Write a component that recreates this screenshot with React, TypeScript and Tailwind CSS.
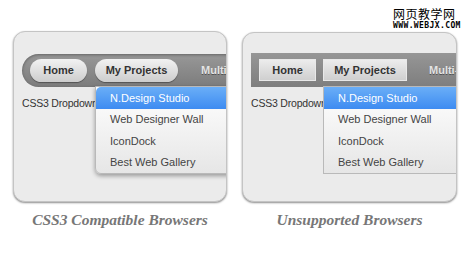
import React from "react";

const items = ["N.Design Studio", "Web Designer Wall", "IconDock", "Best Web Gallery"];

function Dropdown({ modern }: { modern: boolean }) {
  return (
    <div
      className={`absolute z-10 left-0 top-[27px] w-[160px] border border-[#b9b9b9] bg-gradient-to-b from-white to-[#e6e6e6] ${
        modern ? "rounded-bl-[6px] shadow-[0_2px_4px_rgba(0,0,0,0.35)]" : ""
      }`}
    >
      {items.map((label, i) => (
        <div
          key={label}
          className={`h-[21.5px] flex items-center pl-[14px] text-[11px] ${
            i === 0
              ? `bg-gradient-to-b from-[#6aaef7] to-[#3d8bf1] text-white ${modern ? "rounded-tl-[5px]" : ""}`
              : "text-[#444]"
          }`}
        >
          {label}
        </div>
      ))}
    </div>
  );
}

function Panel({ modern }: { modern: boolean }) {
  const btn = modern
    ? "rounded-full bg-gradient-to-b from-[#f2f2f2] to-[#cdcdcd] shadow-[0_1px_1px_rgba(0,0,0,0.35)]"
    : "bg-gradient-to-b from-[#ececec] to-[#cfcfcf] border border-[#e8e8e8]";
  return (
    <div
      className={`relative overflow-hidden rounded-[12px] border border-[#c4c4c4] bg-[#ebebeb] shadow-[0_1px_2px_rgba(0,0,0,0.45)] pl-[8px] ${
        modern ? "w-[214px] h-[171px] pt-[22px]" : "w-[215px] h-[170px] pt-[20px]"
      }`}
    >
      <div
        className={`flex items-center w-[280px] pl-[8px] bg-gradient-to-b ${
          modern
            ? "h-[33px] gap-[8px] rounded-l-full from-[#989898] to-[#7c7c7c] shadow-[inset_0_1px_3px_rgba(0,0,0,0.35)]"
            : "h-[34px] gap-[7px] from-[#969696] to-[#7e7e7e]"
        }`}
      >
        <div className={`${btn} w-[57px] ${modern ? "h-[23px]" : "h-[22px]"} flex items-center justify-center text-[11px] font-bold text-[#333]`}>
          Home
        </div>
        <div className="relative">
          <div className={`${btn} ${modern ? "w-[83px] h-[23px]" : "w-[84px] h-[22px]"} flex items-center justify-center text-[11px] font-bold text-[#333]`}>
            My Projects
          </div>
          <Dropdown modern={modern} />
        </div>
        <div className="ml-[15px] text-[11px] font-bold text-[#e4e4e4] whitespace-nowrap [text-shadow:0_1px_0_rgba(0,0,0,0.4)]">
          Multi-level
        </div>
      </div>
      <div className="mt-[9px] text-[10.5px] tracking-[-0.2px] text-[#333] whitespace-nowrap">CSS3 Dropdown</div>
    </div>
  );
}

export default function App() {
  return (
    <div className="relative w-[470px] h-[261px] overflow-hidden bg-white font-['Liberation_Sans',sans-serif]">
      <div className="flex gap-[15px] pl-[13px] pt-[31px]">
        <div className="flex flex-col items-center">
          <Panel modern />
          <div className="mt-[6px] font-['Liberation_Serif',serif] italic font-bold text-[15.5px] text-[#777]">
            CSS3 Compatible Browsers
          </div>
        </div>
        <div className="flex flex-col items-center pt-[1px]">
          <Panel modern={false} />
          <div className="mt-[6px] font-['Liberation_Serif',serif] italic font-bold text-[15.5px] text-[#777]">
            Unsupported Browsers
          </div>
        </div>
      </div>

      {/* watermark */}
      <div className="absolute right-0 top-0 w-[82px] h-[31px] bg-white flex flex-col items-start pl-[5px] pt-[7px]">
        <div className="text-[12px] leading-[14px] tracking-[0.5px] text-black font-['Noto_Sans_CJK_SC',sans-serif]">网页教学网</div>
        <div className="text-[8px] leading-[9px] font-bold tracking-[0.4px] text-black font-['DejaVu_Sans_Mono',monospace]">
          WWW.WEBJX.COM
        </div>
      </div>
    </div>
  );
}
